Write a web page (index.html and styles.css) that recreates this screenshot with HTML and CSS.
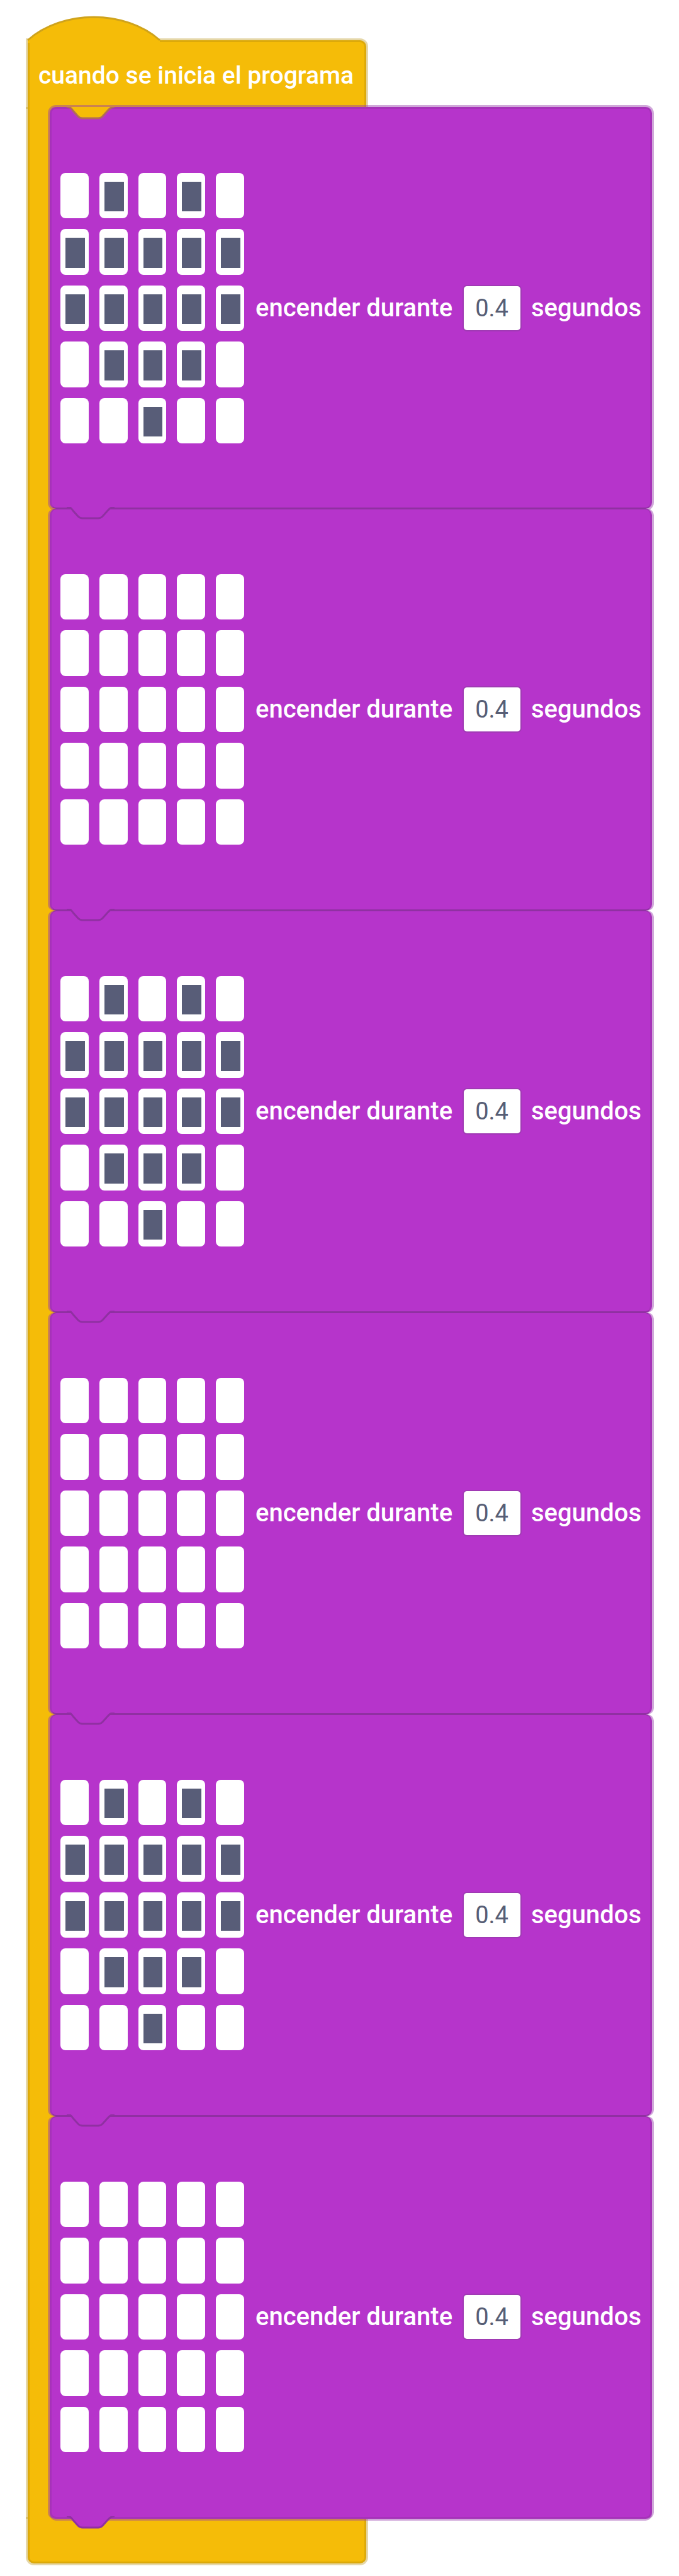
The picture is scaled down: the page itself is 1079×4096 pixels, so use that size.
FILE: index.html
```
<!DOCTYPE html>
<html lang="es">
<head>
<meta charset="utf-8">
<meta name="viewport" content="width=device-width, initial-scale=1">
<title>Programa</title>
<link rel="stylesheet" href="styles.css">
</head>
<body>
<main class="program">
  <header class="event">
    <svg class="hat" viewBox="0 0 214 44" aria-hidden="true">
      <path class="hat-fill" d="M1 44V40C56-9 156-9 211 40V44Z"/>
      <path class="hat-line" d="M1 40C56-9 156-9 211 40"/>
    </svg>
    <h1 class="event-title">cuando se inicia el programa</h1>
    <svg class="tab tab-event" viewBox="0 0 76 24" aria-hidden="true"><path d="M0 0C6 0 8 3 10 6L18 15Q21 18 25 18H50Q54 18 57 15L65 6C68 3 70 0 76 0"/></svg>
  </header>
  <div class="stack" id="stack"></div>
  <footer class="event-end"></footer>
</main>
<template id="block">
  <section class="block">
    <div class="leds" role="group" aria-label="Matriz de luces"></div>
    <label class="duration"><span>encender durante</span><input class="seconds" type="text" value="0.4"><span>segundos</span></label>
    <svg class="tab" viewBox="0 0 76 24" aria-hidden="true"><path d="M0 0C6 0 8 3 10 6L18 15Q21 18 25 18H50Q54 18 57 15L65 6C68 3 70 0 76 0"/></svg>
  </section>
</template>
<script src="program.js"></script>
</body>
</html>
```
FILE: styles.css
```
* { box-sizing: border-box; }

body {
  margin: 0;
  background: #fff;
  color: #fff;
  font-family: Roboto, "Liberation Sans", sans-serif;
  font-weight: 500;
}

.program {
  display: flex;
  flex-direction: column;
  padding: 64px 43px 21px 44px;
}

.event,
.event-end {
  position: relative;
  width: 538px;
  background: #f5bc08;
  border: 3px solid #dca90a;
  box-shadow: 0 0 0 3px rgba(190, 155, 40, 0.4);
}

.event {
  height: 106px;
  padding: 2px 0 0 14px;
  display: flex;
  align-items: center;
  border-bottom: 0;
  border-radius: 0 10px 0 0;
}

.event-title {
  margin: 0;
  font-size: 39px;
  line-height: 46px;
  font-weight: 500;
  white-space: nowrap;
}

.event-end {
  height: 71px;
  border-top: 0;
  border-radius: 0 0 10px 10px;
}

.hat {
  position: absolute;
  left: -4px;
  top: -43px;
  width: 214px;
  height: 44px;
}

.hat-fill { fill: #f5bc08; }

.hat-line {
  fill: none;
  stroke: #cfa31c;
  stroke-width: 3;
}

.stack {
  position: relative;
  z-index: 1;
  padding-left: 35px;
  background: linear-gradient(#f5bc08, #f5bc08) 0 0 / 46px 100% no-repeat;
  box-shadow: inset 3px 0 #dca90a, -3px 0 rgba(190, 155, 40, 0.4);
}

.block {
  position: relative;
  display: flex;
  align-items: center;
  gap: 18px;
  height: 639px;
  padding: 0 14px;
  background: #b634cb;
  border: 3px solid #a632b9;
  border-top: 1px solid #9030a2;
  border-bottom: 2px solid #9030a2;
  border-radius: 10px;
  box-shadow: 3px 0 rgba(150, 60, 170, 0.45), -3px 0 rgba(150, 60, 170, 0.45);
}

.block:first-child {
  border-top: 3px solid #a632b9;
  box-shadow: 0 0 0 3px rgba(150, 60, 170, 0.45);
}

.block:last-child {
  height: 640px;
  border-bottom: 3px solid #a632b9;
  box-shadow: 3px 0 rgba(150, 60, 170, 0.45), -3px 0 rgba(150, 60, 170, 0.45), 0 3px rgba(150, 60, 170, 0.45);
}

.tab {
  position: absolute;
  z-index: 1;
  left: 24px;
  bottom: -23px;
  width: 76px;
  height: 24px;
  fill: #b634cb;
  stroke: #9030a2;
  stroke-width: 3;
}

.tab-event {
  z-index: 2;
  left: 59px;
  bottom: -24px;
  fill: #f5bc08;
  stroke: #b06c58;
}

.leds {
  flex: none;
  display: grid;
  grid-template: repeat(5, 1fr) / repeat(5, 1fr);
  gap: 17px;
  width: 292px;
  height: 430px;
}

.led {
  appearance: none;
  width: 100%;
  height: 100%;
  margin: 0;
  padding: 14px 6px 11px 8px;
  background: #fff;
  border-radius: 8px;
}

.led:checked::before {
  content: "";
  display: block;
  height: 100%;
  background: #585d78;
}

.duration {
  flex: 1;
  display: flex;
  align-items: center;
  justify-content: space-between;
  font-size: 40px;
  line-height: 46px;
  white-space: nowrap;
}

.seconds {
  width: 90px;
  height: 70px;
  padding: 0;
  border: 0;
  border-radius: 5px;
  box-shadow: 0 0 0 2px #a03ab4;
  background: #fff;
  color: #575e75;
  font: 400 38px Roboto, "Liberation Sans", sans-serif;
  text-align: center;
}
```
FILE: program.js
```
const heart = ["01010", "11111", "11111", "01110", "00100"];
const blank = ["00000", "00000", "00000", "00000", "00000"];
const stack = document.getElementById("stack");
const template = document.getElementById("block");

[heart, blank, heart, blank, heart, blank].forEach((rows) => {
  const block = template.content.cloneNode(true);
  const leds = block.querySelector(".leds");
  rows.forEach((row, y) => {
    [...row].forEach((on, x) => {
      const led = document.createElement("input");
      led.type = "checkbox";
      led.className = "led";
      led.checked = on === "1";
      led.setAttribute("aria-label", `Luz ${x + 1}, ${y + 1}`);
      leds.append(led);
    });
  });
  stack.append(block);
});
```
